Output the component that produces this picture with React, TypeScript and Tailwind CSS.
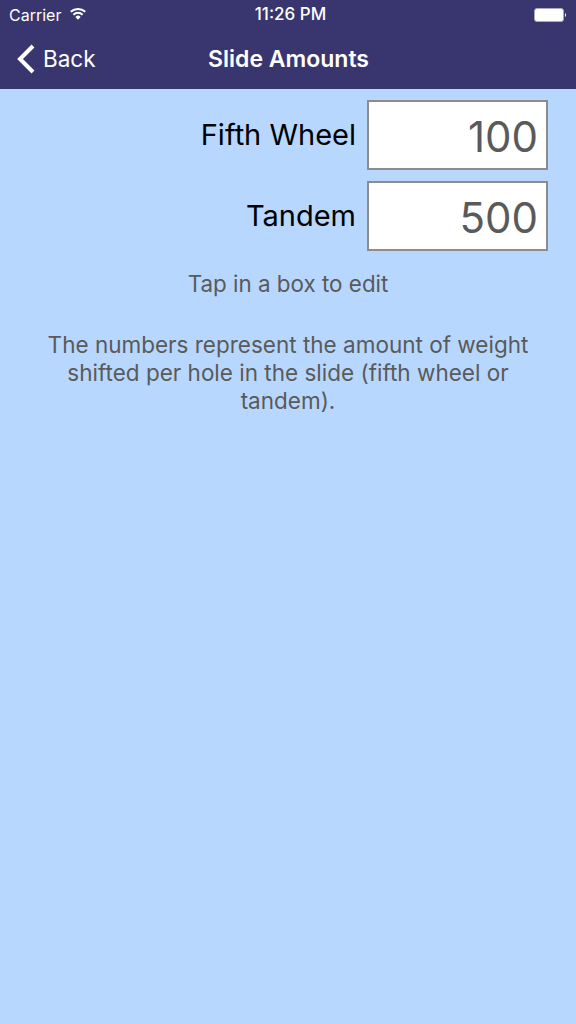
export default function App() {
  return (
    <div className="flex h-[1024px] w-[576px] flex-col overflow-hidden bg-[#b7d7fe] font-['Inter',sans-serif]">
      <header className="h-[89px] bg-[#39366f] text-white">
        <div className="flex h-[30px] items-center justify-between px-[9px]">
          <div className="flex w-[155px] items-center gap-[8px] text-[16px]">
            <span>Carrier</span>
            <svg width="18" height="13" viewBox="0 0 17 12" fill="white" className="mb-[3px]">
              <path d="M8.5 12 6 9.2a3.6 3.6 0 0 1 5 0L8.500 12Z" />
              <path d="M4.800 7.800 3.500 6.400a7.300 7.300 0 0 1 10 0l-1.300 1.400a5.400 5.400 0 0 0-7.400 0Z" />
              <path d="M2.300 5.100 1 3.700a11 11 0 0 1 15 0l-1.300 1.400a9.100 9.100 0 0 0-12.400 0Z" />
            </svg>
          </div>
          <span className="text-[17px] font-medium">11:26 PM</span>
          <div className="flex w-[150px] justify-end">
            <svg width="33" height="14" viewBox="0 0 33 14">
              <rect x="0.5" y="0.5" width="29" height="13" rx="2.500" fill="white" stroke="#aab" />
              <path d="M31 5v4a2 2 0 0 0 1-2 2 2 0 0 0-1-2Z" fill="white" />
            </svg>
          </div>
        </div>
        <div className="flex h-[59px] items-center pb-[1px]">
          <div className="flex w-[140px] items-center gap-[8px] pl-[17px] text-[22.5px]">
            <svg width="18" height="30" viewBox="0 0 18 30" fill="none" stroke="white" strokeWidth="4">
              <path d="M16 2 3 15l13 13" />
            </svg>
            <span>Back</span>
          </div>
          <h1 className="w-[297px] text-center text-[23px] font-semibold">Slide Amounts</h1>
        </div>
      </header>

      <main className="flex flex-col pt-[11px]">
        <div className="flex flex-col gap-[11px] pr-[28px]">
          <div className="flex items-center justify-end gap-[11px]">
            <span className="text-[29px] text-black">Fifth Wheel</span>
            <div className="flex h-[70px] w-[181px] items-center justify-end border-2 border-[#8c8c8c] bg-white pt-[3px] pr-[8px] text-[42px] text-[#5a5a5a]">
              100
            </div>
          </div>
          <div className="flex items-center justify-end gap-[11px]">
            <span className="text-[29px] text-black">Tandem</span>
            <div className="flex h-[70px] w-[181px] items-center justify-end border-2 border-[#8c8c8c] bg-white pt-[3px] pr-[8px] text-[42px] text-[#5a5a5a]">
              500
            </div>
          </div>
        </div>
        <p className="mt-[17px] text-center text-[22.4px] leading-[32px] text-[#5a5a5a]">Tap in a box to edit</p>
        <p className="mx-auto mt-[31px] w-[500px] text-center text-[22.5px] leading-[28px] text-[#5a5a5a]">
          The numbers represent the amount of weight shifted per hole in the slide (fifth wheel or tandem).
        </p>
      </main>
    </div>
  );
}
